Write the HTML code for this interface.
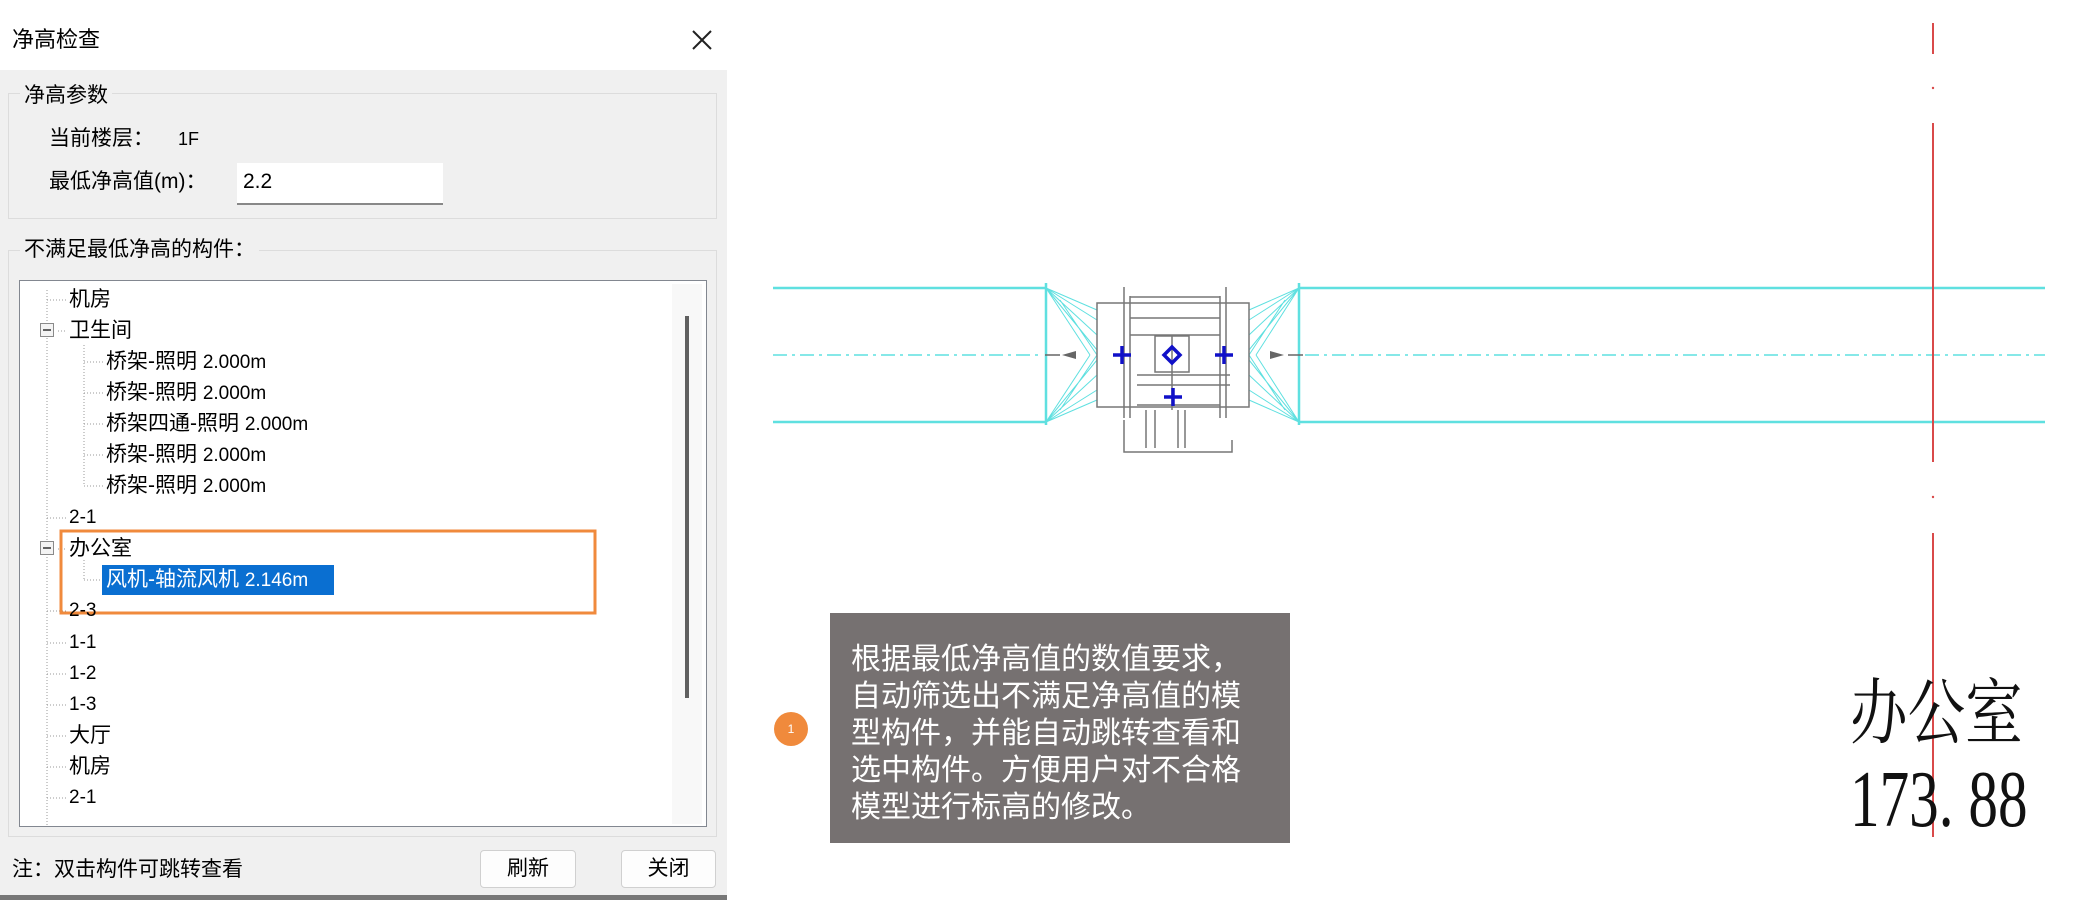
<!DOCTYPE html>
<html><head><meta charset="utf-8"><style>
*{margin:0;padding:0;box-sizing:border-box}
body{width:2098px;height:900px;background:#fff;position:relative;overflow:hidden;font-family:"Liberation Sans","Microsoft YaHei","Noto Sans CJK SC",sans-serif;color:#000}
.a{position:absolute;white-space:nowrap}
.t{font-size:21px;line-height:24px}
</style></head><body>
<div class="a" style="left:0;top:0;width:727px;height:70px;background:#fff"></div>
<div class="a t" style="left:12px;top:28px;font-size:22px">净高检查</div>
<svg class="a" style="left:690px;top:28px" width="24" height="24"><path d="M3 3L21 21M21 3L3 21" stroke="#222" stroke-width="2"/></svg>
<div class="a" style="left:0;top:70px;width:727px;height:826px;background:#f0f0f0"></div>
<div class="a" style="left:0;top:895px;width:727px;height:5px;background:#777"></div>
<div class="a" style="left:8px;top:93px;width:709px;height:126px;border:1px solid #dcdcdc"></div>
<div class="a t" style="left:20px;top:84px;background:#f0f0f0;padding:0 4px">净高参数</div>
<div class="a t" style="left:49px;top:127px">当前楼层：</div>
<div class="a t" style="left:178px;top:127px;font-size:18px">1F</div>
<div class="a t" style="left:49px;top:170px">最低净高值(m)：</div>
<div class="a" style="left:237px;top:163px;width:206px;height:42px;background:#fff;border-bottom:2px solid #888"></div>
<div class="a t" style="left:243px;top:170px">2.2</div>
<div class="a" style="left:8px;top:250px;width:709px;height:587px;border:1px solid #dcdcdc"></div>
<div class="a t" style="left:20px;top:238px;background:#f0f0f0;padding:0 4px">不满足最低净高的构件：</div>
<div class="a" style="left:19px;top:280px;width:688px;height:547px;background:#fff;border:1px solid #828790"></div>
<div class="a" style="left:672px;top:284px;width:30px;height:540px;background:#f8f8f8"></div>
<div class="a" style="left:685px;top:316px;width:4px;height:382px;background:#606060"></div>
<svg class="a" style="left:0;top:0" width="727" height="900">
<g stroke="#999" stroke-width="1" stroke-dasharray="1,2" fill="none">
<path d="M47 290V826"/>
<path d="M84 345V486"/>
<path d="M84 560V580"/>
<path d="M47 300H66M58 331H66M84 362H104M84 393H104M84 424H104M84 455H104M84 486H104M47 518H66M58 549H66M84 580H104M47 611H66M47 643H66M47 674H66M47 705H66M47 736H66M47 767H66M47 798H66"/>
</g>
<g fill="#f4f4f4" stroke="#8a8a8a"><rect x="40.5" y="323.5" width="13" height="13"/><rect x="40.5" y="541.5" width="13" height="13"/></g>
<path d="M43 330H51M43 548H51" stroke="#333" stroke-width="1.5"/>
<rect x="61" y="531" width="534" height="82" fill="none" stroke="#f08a3c" stroke-width="3"/>
</svg>
<div class="a" style="left:102px;top:565px;width:232px;height:30px;background:#0a6fd1"></div>
<div class="a t" style="left:69px;top:288px">机房</div>
<div class="a t" style="left:69px;top:319px">卫生间</div>
<div class="a t" style="left:106px;top:350px">桥架-照明 <span style="font-size:19px">2.000m</span></div>
<div class="a t" style="left:106px;top:381px">桥架-照明 <span style="font-size:19px">2.000m</span></div>
<div class="a t" style="left:106px;top:412px">桥架四通-照明 <span style="font-size:19px">2.000m</span></div>
<div class="a t" style="left:106px;top:443px">桥架-照明 <span style="font-size:19px">2.000m</span></div>
<div class="a t" style="left:106px;top:474px">桥架-照明 <span style="font-size:19px">2.000m</span></div>
<div class="a t" style="left:69px;top:506px;font-size:19px">2-1</div>
<div class="a t" style="left:69px;top:537px">办公室</div>
<div class="a t" style="left:106px;top:568px;color:#fff">风机-轴流风机 <span style="font-size:19px">2.146m</span></div>
<div class="a t" style="left:69px;top:599px;font-size:19px">2-3</div>
<div class="a t" style="left:69px;top:631px;font-size:19px">1-1</div>
<div class="a t" style="left:69px;top:662px;font-size:19px">1-2</div>
<div class="a t" style="left:69px;top:693px;font-size:19px">1-3</div>
<div class="a t" style="left:69px;top:724px">大厅</div>
<div class="a t" style="left:69px;top:755px">机房</div>
<div class="a t" style="left:69px;top:786px;font-size:19px">2-1</div>
<div class="a t" style="left:12px;top:858px">注：双击构件可跳转查看</div>
<div class="a" style="left:480px;top:850px;width:96px;height:38px;background:#fdfdfd;border:1px solid #d0d0d0;border-radius:4px;text-align:center;font-size:21px;line-height:36px">刷新</div>
<div class="a" style="left:621px;top:850px;width:95px;height:38px;background:#fdfdfd;border:1px solid #d0d0d0;border-radius:4px;text-align:center;font-size:21px;line-height:36px">关闭</div>

<svg class="a" style="left:0;top:0" width="2098" height="900">
<g stroke="#5fe0e0" stroke-width="2.5">
<path d="M773 288H1046M773 422H1046M1299 288H2045M1299 422H2045M1046 283V425M1299 283V425"/>
</g>
<path d="M773 355H1040M1305 355H2045" stroke="#5fe0e0" stroke-width="1.5" stroke-dasharray="14,5,3,5"/>
<g stroke="#5fe0e0" stroke-width="1" fill="none">
<path d="M1046 288L1097 310M1046 288L1097 320M1046 288L1097 335M1046 288L1097 350M1046 288L1090 355M1060 300L1097 355M1046 422L1097 400M1046 422L1097 390M1046 422L1097 375M1046 422L1097 360M1046 422L1090 355M1060 410L1097 355"/>
<path d="M1299 288L1249 310M1299 288L1249 320M1299 288L1249 335M1299 288L1249 350M1299 288L1256 355M1285 300L1249 355M1299 422L1249 400M1299 422L1249 390M1299 422L1249 375M1299 422L1249 360M1299 422L1256 355M1285 410L1249 355"/>
</g>
<g stroke="#777" stroke-width="1.5" fill="none">
<rect x="1097" y="303" width="152" height="104"/>
<path d="M1124 287V418M1226 287V418M1130 296V418M1220 296V418M1130 297H1220M1130 318H1220M1130 335H1220M1172 335V410M1137 375H1230M1137 385H1230M1137 405H1220M1124 420V452H1232V440"/>
<rect x="1155" y="336" width="34" height="36"/>
<path d="M1146 410V448M1155 410V448M1178 410V448M1185 410V448"/>
</g>
<path d="M1060 355h-15M1288 355h15" stroke="#666" stroke-width="1.5"/>
<path d="M1062 355l14-4v8zM1284 355l-14-4v8z" fill="#666"/>
<g stroke="#1010c8" stroke-width="3.5" fill="none">
<path d="M1113 355h18M1122 346v18M1215 355h18M1224 346v18M1164 397h18M1173 388v18"/>
<path d="M1172 347l8 8-8 8-8-8z"/>
</g>
<g stroke="#d94a4a" stroke-width="2"><path d="M1933 23V54M1933 123V462M1933 533V837"/></g>
<circle cx="1933" cy="88" r="1.2" fill="#d94a4a"/><circle cx="1933" cy="497" r="1.2" fill="#d94a4a"/>
<text x="1850" y="738" font-family="Noto Serif CJK SC,serif" font-size="72" fill="#111" transform="translate(1850 0) scale(0.8 1) translate(-1850 0)">办公室</text>
<text x="1850" y="826" font-family="Liberation Serif,serif" font-size="80" fill="#111" transform="translate(1850 0) scale(0.74 1) translate(-1850 0)">173. 88</text>
</svg>
<div class="a" style="left:830px;top:613px;width:460px;height:230px;background:#767171"></div>
<div class="a" style="left:851px;top:641px;color:#fff;font-size:30px;line-height:37px;white-space:normal;width:440px">根据最低净高值的数值要求，<br>自动筛选出不满足净高值的模<br>型构件，并能自动跳转查看和<br>选中构件。方便用户对不合格<br>模型进行标高的修改。</div>
<div class="a" style="left:774px;top:712px;width:34px;height:34px;border-radius:50%;background:#f08a3c;color:#fff;font-size:12px;line-height:34px;text-align:center">1</div>
</body></html>
